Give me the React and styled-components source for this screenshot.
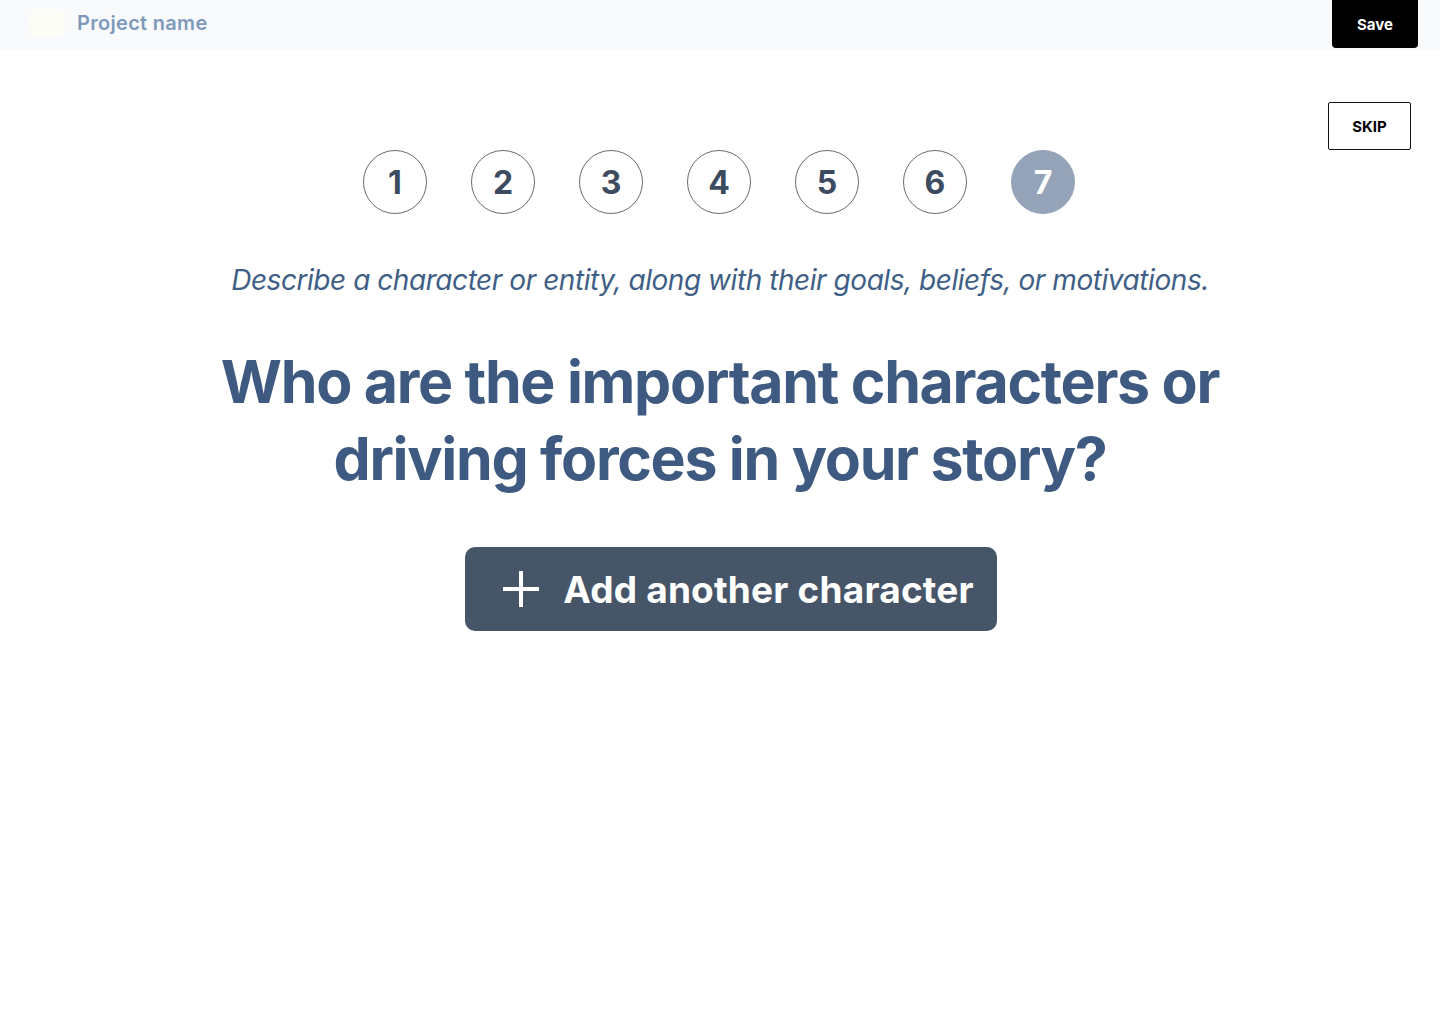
import React from "react";
import styled, { createGlobalStyle } from "styled-components";

const Global = createGlobalStyle`
  html, body { margin: 0; padding: 0; background: #ffffff; }
  body { font-family: Inter, "Noto Sans", sans-serif; }
  * { box-sizing: border-box; }
`;

const Page = styled.div`
  min-height: 1024px;
  display: flex;
  flex-direction: column;
`;

const TopBar = styled.header`
  height: 49px;
  background: #f8fafc;
  display: flex;
  align-items: flex-start;
  justify-content: space-between;
  padding: 0 22px 0 30px;
`;

const Brand = styled.div`
  display: flex;
  align-items: center;
  gap: 12px;
  height: 45px;
`;

const LogoBox = styled.div`
  width: 35px;
  height: 28px;
  border-radius: 8px;
  background: #fdfdf7;
`;

const ProjectName = styled.span`
  font-size: 20px;
  font-weight: 600;
  color: #7f99bb;
  letter-spacing: 0.3px;
`;

const SaveButton = styled.button`
  width: 86px;
  height: 48px;
  border: none;
  border-radius: 0 0 4px 4px;
  background: #000;
  color: #fff;
  font-family: Inter, sans-serif;
  font-weight: 700;
  font-size: 15px;
  cursor: pointer;
`;

const Main = styled.main`
  display: flex;
  flex-direction: column;
  align-items: center;
  padding: 0 29px 0 0;
`;

const SkipRow = styled.div`
  align-self: stretch;
  display: flex;
  justify-content: flex-end;
  padding-top: 53px;
`;

const SkipButton = styled.button`
  width: 83px;
  height: 48px;
  border: 1px solid #111;
  border-radius: 2px;
  background: #fff;
  font-family: Inter, sans-serif;
  font-weight: 700;
  font-size: 15px;
  color: #000;
`;

const Steps = styled.div`
  display: flex;
  gap: 44px;
  margin-left: 27px;
`;

const Step = styled.div`
  width: 64px;
  height: 64px;
  border-radius: 50%;
  display: flex;
  align-items: center;
  justify-content: center;
  font-size: 32px;
  font-weight: 700;
  border: 1px solid ${p => (p.$active ? "#94a3b8" : "#6b6b6b")};
  background: ${p => (p.$active ? "#94a3b8" : "#ffffff")};
  color: ${p => (p.$active ? "#ffffff" : "#3d4b60")};
`;

const Hint = styled.p`
  margin: 49px 0 0 29px;
  font-size: 28px;
  font-style: italic;
  color: #3f5f86;
  letter-spacing: -0.45px;
  text-align: center;
`;

const Question = styled.h1`
  margin: 46px 0 0 29px;
  font-size: 59px;
  line-height: 77px;
  font-weight: 700;
  color: #3f5a80;
  letter-spacing: -1.3px;
  text-align: center;
  max-width: 1040px;
`;

const AddButton = styled.button`
  margin: 50px 0 0 50px;
  width: 532px;
  height: 84px;
  border: none;
  border-radius: 10px;
  background: #475569;
  color: #fff;
  display: flex;
  align-items: center;
  justify-content: center;
  gap: 22px;
  padding: 0 0 0 14px;
  font-family: Inter, sans-serif;
  font-size: 37px;
  font-weight: 700;
  letter-spacing: 0.2px;
  cursor: pointer;
`;

const steps = [1, 2, 3, 4, 5, 6, 7];

export default function App() {
  return (
    <Page>
      <Global />
      <TopBar>
        <Brand>
          <LogoBox />
          <ProjectName>Project name</ProjectName>
        </Brand>
        <SaveButton>Save</SaveButton>
      </TopBar>
      <Main>
        <SkipRow>
          <SkipButton>SKIP</SkipButton>
        </SkipRow>
        <Steps>
          {steps.map(n => (
            <Step key={n} $active={n === 7}>{n}</Step>
          ))}
        </Steps>
        <Hint>Describe a character or entity, along with their goals, beliefs, or motivations.</Hint>
        <Question>Who are the important characters or driving forces in your story?</Question>
        <AddButton>
          <svg width="40" height="40" viewBox="0 0 40 40" fill="none" stroke="#fff" strokeWidth="4">
            <path d="M20 2v36M2 20h36" />
          </svg>
          Add another character
        </AddButton>
      </Main>
    </Page>
  );
}
